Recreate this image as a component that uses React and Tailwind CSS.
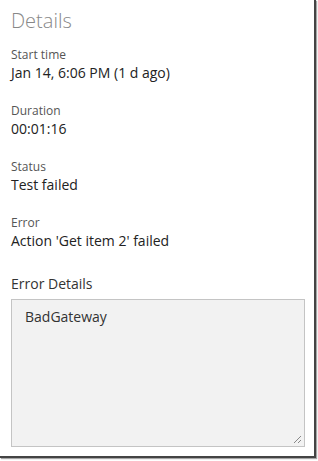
import React from "react";

function Field({ label, value }) {
  return (
    <div className="mb-[20px]">
      <div className="text-[12px] leading-[16px] text-[#555]">{label}</div>
      <div className="text-[14px] leading-[20px] text-[#222]">{value}</div>
    </div>
  );
}

export default function App() {
  return (
    <div className="w-[318px] h-[461px] bg-white" style={{ fontFamily: '"Segoe UI", "Open Sans", sans-serif' }}>
      <div className="w-[316px] h-[458px] flex flex-col bg-white border-r-[2px] border-b-[2px] border-[#444] shadow-[1px_1px_1px_rgba(0,0,0,0.35)] px-[11px] pt-[7px]">
        <h2 className="text-[20px] leading-[28px] font-light text-[#888] mb-[12px]">Details</h2>

        <Field label="Start time" value="Jan 14, 6:06 PM (1 d ago)" />
        <Field label="Duration" value="00:01:16" />
        <Field label="Status" value="Test failed" />
        <Field label="Error" value="Action 'Get item 2' failed" />

        <div className="text-[14px] leading-[20px] text-[#333] mt-[3px]">Error Details</div>
        <div className="relative mt-[5px] w-[294px] h-[148px] bg-[#f2f2f2] border border-[#c4c4c4] px-[13px] pt-[7px]">
          <div className="text-[14px] leading-[20px] text-[#333]">BadGateway</div>
          <svg className="absolute right-[2px] bottom-[2px]" width="9" height="9" viewBox="0 0 9 9">
            <line x1="1" y1="8" x2="8" y2="1" stroke="#888" strokeWidth="1" />
            <line x1="5" y1="8" x2="8" y2="5" stroke="#888" strokeWidth="1" />
          </svg>
        </div>
      </div>
    </div>
  );
}
